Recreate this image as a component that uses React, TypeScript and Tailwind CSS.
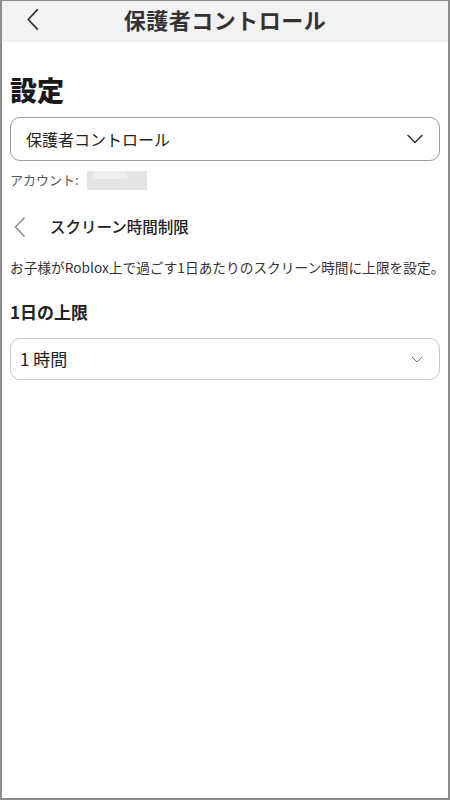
import React from "react";

const Chevron = ({ className, stroke = "#333", sw = 1.6 }: { className?: string; stroke?: string; sw?: number }) => (
  <svg viewBox="0 0 16 10" className={className} fill="none">
    <path d="M1 1.5 L8 8.5 L15 1.5" stroke={stroke} strokeWidth={sw} strokeLinecap="round" strokeLinejoin="round" />
  </svg>
);

const Back = ({ className, stroke = "#333", sw = 2 }: { className?: string; stroke?: string; sw?: number }) => (
  <svg viewBox="0 0 12 22" className={className} fill="none">
    <path d="M11 1 L1.5 11 L11 21" stroke={stroke} strokeWidth={sw} strokeLinecap="round" strokeLinejoin="round" />
  </svg>
);

export default function App() {
  return (
    <div
      className="w-[450px] h-[800px] bg-white border-x-2 border-b-2 border-t border-[#8c8c8c] flex flex-col overflow-hidden"
      style={{ fontFamily: '"Noto Sans CJK JP", "Noto Sans", sans-serif' }}
    >
      <div className="h-[41px] bg-[#f2f2f4] relative flex items-center justify-center shrink-0">
        <Back className="absolute left-[24px] top-[8px] w-[13px] h-[21px]" stroke="#333" sw={1.8} />
        <span className="text-[22px] font-semibold text-[#333] leading-none tracking-[0.5px] -mt-[6px]">保護者コントロール</span>
      </div>
      <div className="px-[8px] flex flex-col">
        <div className="mt-[34px] text-[27px] font-black text-[#1a1a1a] leading-none">設定</div>
        <div className="mt-[14px] h-[44px] rounded-[10px] border border-[#9c9ca8] flex items-center justify-between pl-[15px] pr-[16px]">
          <span className="text-[16px] text-[#222]">保護者コントロール</span>
          <Chevron className="w-[16px] h-[10px]" stroke="#333" sw={1.5} />
        </div>
        <div className="mt-[9px] flex items-center h-[20px]">
          <span className="text-[13px] text-[#555]">アカウント:</span>
          <div className="ml-[8px] w-[60px] h-[19px] bg-[#e4e4e6] flex flex-col">
            <div className="h-[8px] bg-[#eeeef0] ml-[6px] w-[34px]" />
          </div>
        </div>
        <div className="mt-[25px] flex items-center h-[24px]">
          <Back className="ml-[4px] w-[11px] h-[20px]" stroke="#8a8a8a" sw={1.6} />
          <span className="ml-[25px] text-[15.5px] font-medium text-[#222]">スクリーン時間制限</span>
        </div>
        <div className="mt-[18px] text-[13.7px] text-[#333] whitespace-nowrap">
          お子様がRoblox上で過ごす1日あたりのスクリーン時間に上限を設定。
        </div>
        <div className="mt-[21px] text-[17px] font-bold text-[#222]">1日の上限</div>
        <div className="mt-[14px] h-[42px] rounded-[10px] border border-[#c8c8cc] flex items-center justify-between pl-[9px] pr-[16px]">
          <span className="text-[17px] text-[#222]">1 時間</span>
          <Chevron className="w-[12px] h-[7px]" stroke="#666" sw={1.3} />
        </div>
      </div>
    </div>
  );
}
